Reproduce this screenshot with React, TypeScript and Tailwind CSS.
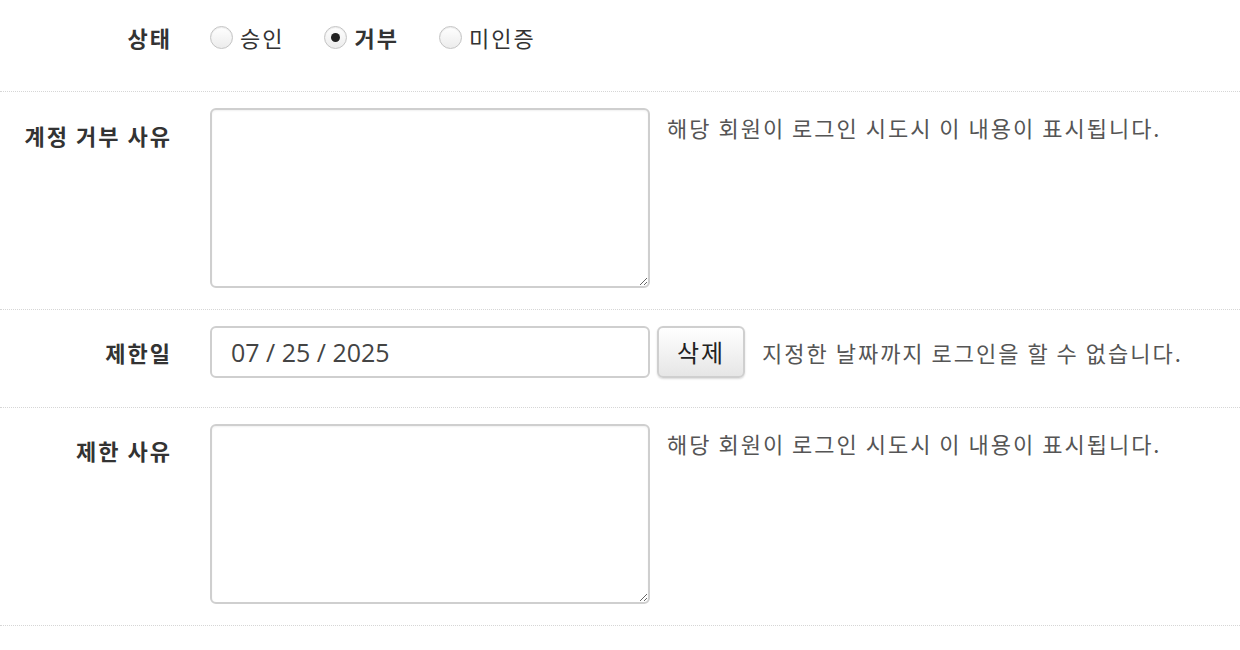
import React from "react";

const font = { fontFamily: '"Noto Sans CJK KR", "Noto Sans", sans-serif' };

function Radio({ label, checked }: { label: string; checked?: boolean }) {
  return (
    <label className="flex items-center gap-[7px]">
      <span className="flex h-[23px] w-[23px] items-center justify-center rounded-full border border-[#c4c4c4] bg-gradient-to-b from-white to-[#ececec] shadow-[inset_0_1px_1px_rgba(0,0,0,0.08)]">
        {checked && <span className="h-[9px] w-[9px] rounded-full bg-[#222]" />}
      </span>
      <span className={checked ? "font-bold text-[#333]" : "text-[#333]"}>{label}</span>
    </label>
  );
}

function Label({ children, className = "" }: { children: React.ReactNode; className?: string }) {
  return (
    <div className={`w-[172px] shrink-0 text-right text-[22px] font-bold leading-[32px] tracking-[2px] text-[#333] ${className}`}>
      {children}
    </div>
  );
}

function Area() {
  return (
    <textarea
      className="block h-[180px] w-[440px] shrink-0 rounded-[6px] border-2 border-[#cfcfcf] bg-white outline-none shadow-[inset_0_1px_2px_rgba(0,0,0,0.06)]"
      defaultValue=""
    />
  );
}

export default function App() {
  return (
    <div className="w-[1240px] bg-white text-[22px] leading-[32px] tracking-[2px]" style={font}>
      {/* 상태 */}
      <div className="flex h-[92px] items-start gap-[38px] border-b border-dotted border-[#d6d6d6] pt-[21px]">
        <Label>상태</Label>
        <div className="flex items-center gap-[40px] text-[22px]">
          <Radio label="승인" />
          <Radio label="거부" checked />
          <Radio label="미인증" />
        </div>
      </div>

      {/* 계정 거부 사유 */}
      <div className="flex items-start gap-[38px] border-b border-dotted border-[#d6d6d6] pb-[21px] pt-[16px]">
        <Label className="pt-[11px]">계정 거부 사유</Label>
        <div className="flex items-start gap-[17px]">
          <Area />
          <p className="pt-[3px] text-[#555]">해당 회원이 로그인 시도시 이 내용이 표시됩니다.</p>
        </div>
      </div>

      {/* 제한일 */}
      <div className="flex items-center gap-[38px] border-b border-dotted border-[#d6d6d6] pb-[29px] pt-[16px]">
        <Label>제한일</Label>
        <div className="flex items-center">
          <input
            readOnly
            value="07 / 25 / 2025"
            className="h-[52px] w-[440px] rounded-[6px] border-2 border-[#cfcfcf] bg-white pl-[19px] text-[25px] tracking-[0px] text-[#444] outline-none"
            style={{ fontFamily: '"Open Sans", "Noto Sans", sans-serif' }}
          />
          <button className="ml-[7px] h-[52px] w-[88px] rounded-[6px] border-2 border-[#cfcfcf] bg-gradient-to-b from-white to-[#e6e6e6] text-[24px] tracking-[2px] text-[#222] shadow-[0_1px_2px_rgba(0,0,0,0.15)]">
            삭제
          </button>
          <p className="ml-[17px] text-[#555]">지정한 날짜까지 로그인을 할 수 없습니다.</p>
        </div>
      </div>

      {/* 제한 사유 */}
      <div className="flex items-start gap-[38px] border-b border-dotted border-[#d6d6d6] pb-[21px] pt-[16px]">
        <Label className="pt-[10px]">제한 사유</Label>
        <div className="flex items-start gap-[17px]">
          <Area />
          <p className="pt-[3px] text-[#555]">해당 회원이 로그인 시도시 이 내용이 표시됩니다.</p>
        </div>
      </div>
    </div>
  );
}
